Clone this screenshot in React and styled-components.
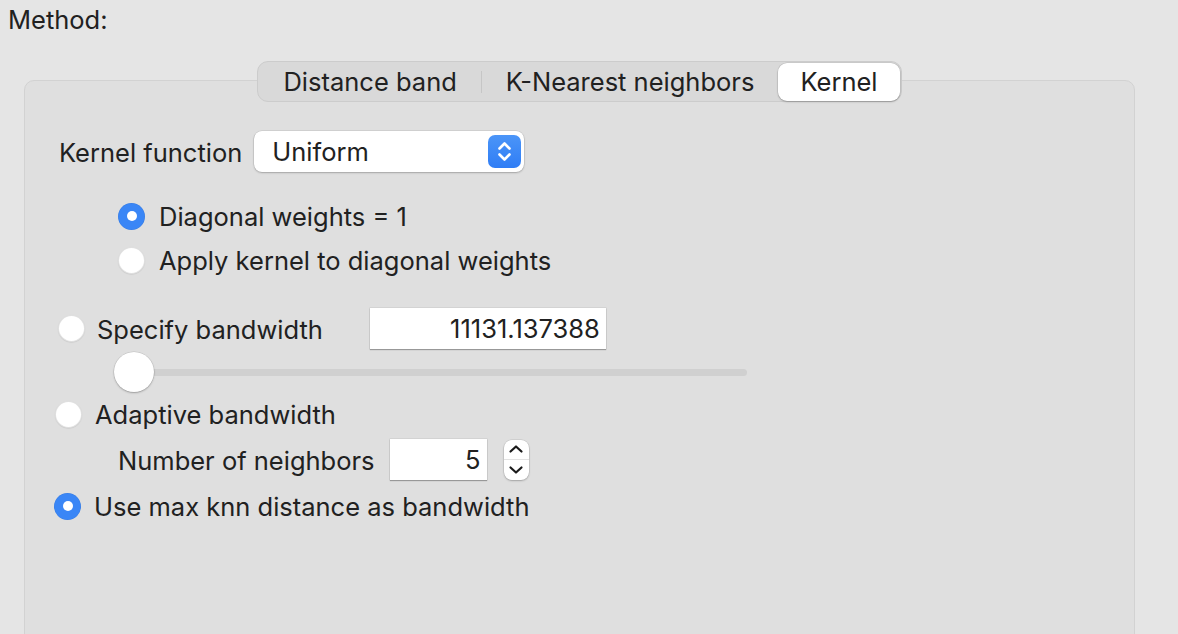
import React from "react";
import styled, { createGlobalStyle } from "styled-components";

const Global = createGlobalStyle`
  html, body { margin: 0; padding: 0; }
  body {
    background: #e5e5e5;
    font-family: Inter, "Noto Sans", "Liberation Sans", sans-serif;
    color: #212121;
    overflow: hidden;
  }
  * { box-sizing: border-box; }
`;

const FS = "25.5px";

const Page = styled.div`
  width: 1178px;
  height: 634px;
  padding-top: 4px;
  display: flex;
  flex-direction: column;
  overflow: hidden;
`;

const MethodLabel = styled.div`
  margin-left: 8px;
  font-size: ${FS};
  line-height: 32px;
`;

const Panel = styled.div`
  margin: 44px 0 0 24px;
  width: 1111px;
  height: 640px;
  flex: none;
  background: #dfdfdf;
  border: 1px solid #d2d2d2;
  border-radius: 10px;
  display: flex;
  flex-direction: column;
`;

const TabRow = styled.div`
  display: flex;
  justify-content: center;
  margin-top: -20px;
`;

const TabBar = styled.div`
  display: flex;
  align-items: center;
  height: 41px;
  padding: 1px;
  background: #d9d9d9;
  border: 1px solid #cccccc;
  border-radius: 11px;
`;

const Tab = styled.div`
  height: 38px;
  display: flex;
  align-items: center;
  padding: 0 ${(p) => p.$pad || 24}px;
  font-size: ${FS};
  border-radius: 9px;
  background: ${(p) => (p.$active ? "#ffffff" : "transparent")};
  box-shadow: ${(p) =>
    p.$active ? "0 0 0 0.5px rgba(0,0,0,0.12), 0 1px 2px rgba(0,0,0,0.22)" : "none"};
`;

const TabDivider = styled.div`
  width: 1px;
  height: 22px;
  background: #c6c6c6;
`;

const Row = styled.div`
  display: flex;
  align-items: center;
  height: ${(p) => p.$h || 28}px;
  margin-top: ${(p) => p.$mt || 0}px;
  padding-left: ${(p) => p.$indent || 0}px;
`;

const Label = styled.span`
  font-size: ${FS};
  line-height: 1;
  padding-top: 2px;
  white-space: nowrap;
  margin-left: ${(p) => p.$ml || 0}px;
`;

const Popup = styled.div`
  margin-left: 12px;
  width: 270px;
  height: 41px;
  background: #ffffff;
  border-radius: 8px;
  box-shadow: 0 0 0 0.5px rgba(0, 0, 0, 0.12), 0 1px 2px rgba(0, 0, 0, 0.22);
  display: flex;
  align-items: center;
  justify-content: space-between;
  padding: 0 3px 0 18px;
  font-size: ${FS};
`;

const PopupButton = styled.div`
  width: 33px;
  height: 33px;
  border-radius: 7px;
  background: linear-gradient(#4b95f8, #2f7df5);
  display: flex;
  align-items: center;
  justify-content: center;
`;

const RadioCircle = styled.div`
  width: 27px;
  height: 27px;
  border-radius: 50%;
  flex: none;
  background: ${(p) => (p.$on ? "#3a86f6" : "#ffffff")};
  box-shadow: ${(p) =>
    p.$on
      ? "inset 0 0 0 0.5px rgba(0,0,0,0.08)"
      : "inset 0 0 0 1px rgba(0,0,0,0.12), 0 0.5px 1px rgba(0,0,0,0.12)"};
  display: flex;
  align-items: center;
  justify-content: center;
  &::after {
    content: "";
    display: ${(p) => (p.$on ? "block" : "none")};
    width: 10px;
    height: 10px;
    border-radius: 50%;
    background: #ffffff;
  }
`;

const Field = styled.div`
  margin-left: ${(p) => p.$ml || 0}px;
  width: ${(p) => p.$w}px;
  height: 41px;
  background: #ffffff;
  box-shadow: 0 0 0 0.5px rgba(0, 0, 0, 0.1), 0 1px 1px rgba(0, 0, 0, 0.28);
  display: flex;
  align-items: center;
  justify-content: flex-end;
  padding-right: 6px;
  font-size: ${FS};
`;

const Slider = styled.div`
  position: relative;
  margin-left: 90px;
  width: 632px;
  height: 40px;
  display: flex;
  align-items: center;
`;

const Track = styled.div`
  width: 100%;
  height: 7px;
  border-radius: 4px;
  background: #d0d0d0;
`;

const Knob = styled.div`
  position: absolute;
  left: -1px;
  top: 0;
  width: 40px;
  height: 40px;
  border-radius: 50%;
  background: #ffffff;
  box-shadow: 0 0 0 0.5px rgba(0, 0, 0, 0.12), 0 1px 2px rgba(0, 0, 0, 0.25);
`;

const Stepper = styled.div`
  margin-left: 17px;
  width: 25px;
  height: 40px;
  border-radius: 8px;
  background: #ffffff;
  box-shadow: 0 0 0 0.5px rgba(0, 0, 0, 0.12), 0 1px 2px rgba(0, 0, 0, 0.22);
  display: flex;
  flex-direction: column;
`;

const StepHalf = styled.div`
  flex: 1;
  display: flex;
  align-items: center;
  justify-content: center;
  border-top: ${(p) => (p.$bottom ? "1px solid #e2e2e2" : "none")};
`;

function Radio({ on, label, indent, mt, gap = 13 }) {
  return (
    <Row $indent={indent} $mt={mt} $h={28}>
      <RadioCircle $on={on} />
      <Label $ml={gap}>{label}</Label>
    </Row>
  );
}

export default function App() {
  return (
    <>
      <Global />
      <Page>
        <MethodLabel>Method:</MethodLabel>
        <Panel>
          <TabRow>
            <TabBar>
              <Tab $pad={24}>Distance band</Tab>
              <TabDivider />
              <Tab $pad={24}>K-Nearest neighbors</Tab>
              <Tab $active $pad={22}>Kernel</Tab>
            </TabBar>
          </TabRow>

          <Row $h={41} $mt={29} $indent={34}>
            <Label>Kernel function</Label>
            <Popup>
              <span>Uniform</span>
              <PopupButton>
                <svg width="33" height="33" viewBox="0 0 33 33" fill="none">
                  <path d="M11.5 13.5 L16.5 8.5 L21.5 13.5" stroke="#fff" strokeWidth="2.6" strokeLinecap="round" strokeLinejoin="round" />
                  <path d="M11.5 19.5 L16.5 24.5 L21.5 19.5" stroke="#fff" strokeWidth="2.6" strokeLinecap="round" strokeLinejoin="round" />
                </svg>
              </PopupButton>
            </Popup>
          </Row>

          <Radio on label="Diagonal weights = 1" indent={93} mt={30} gap={14} />
          <Radio label="Apply kernel to diagonal weights" indent={93} mt={16} gap={14} />

          <Row $h={41} $mt={34} $indent={33}>
            <RadioCircle />
            <Label $ml={12}>Specify bandwidth</Label>
            <Field $ml={47} $w={236}>11131.137388</Field>
          </Row>

          <Row $h={40} $mt={3}>
            <Slider>
              <Track />
              <Knob />
            </Slider>
          </Row>

          <Radio label="Adaptive bandwidth" indent={30} mt={8} />

          <Row $h={41} $mt={11} $indent={93}>
            <Label>Number of neighbors</Label>
            <Field $ml={15} $w={97}>5</Field>
            <Stepper>
              <StepHalf>
                <svg width="16" height="10" viewBox="0 0 16 10" fill="none">
                  <path d="M2.5 7.5 L8 2.5 L13.5 7.5" stroke="#1a1a1a" strokeWidth="2.2" strokeLinecap="round" strokeLinejoin="round" />
                </svg>
              </StepHalf>
              <StepHalf $bottom>
                <svg width="16" height="10" viewBox="0 0 16 10" fill="none">
                  <path d="M2.5 2.5 L8 7.5 L13.5 2.5" stroke="#1a1a1a" strokeWidth="2.2" strokeLinecap="round" strokeLinejoin="round" />
                </svg>
              </StepHalf>
            </Stepper>
          </Row>

          <Radio on label="Use max knn distance as bandwidth" indent={29} mt={12} />
        </Panel>
      </Page>
    </>
  );
}
